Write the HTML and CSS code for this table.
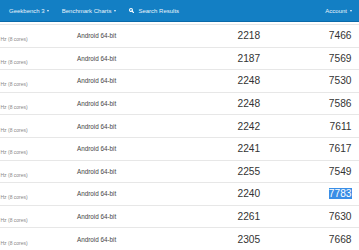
FILE: index.html
```html
<!DOCTYPE html>
<html lang="en">
<head>
<meta charset="utf-8">
<title>Geekbench 3 results</title>
<link rel="stylesheet" href="styles.css">
</head>
<body>
<nav class="topbar">
  <a class="nav-item">Geekbench 3<span class="caret"></span></a>
  <a class="nav-item">Benchmark Charts<span class="caret"></span></a>
  <a class="nav-item search"><svg viewBox="0 0 5 5" aria-hidden="true"><circle cx="2" cy="2" r="1.45" fill="none" stroke="currentColor" stroke-width="1.1"/><line x1="3" y1="3" x2="4.6" y2="4.6" stroke="currentColor" stroke-width="1.2" stroke-linecap="round"/></svg>Search Results</a>
  <a class="nav-item account">Account<span class="caret"></span></a>
</nav>
<main class="results">
  <div class="row"><div class="proc">Hz (8 cores)</div><div class="platform">Android 64-bit</div><div class="score">2218</div><div class="score multi">7466</div></div>
  <div class="row"><div class="proc">Hz (8 cores)</div><div class="platform">Android 64-bit</div><div class="score">2187</div><div class="score multi">7569</div></div>
  <div class="row"><div class="proc">Hz (8 cores)</div><div class="platform">Android 64-bit</div><div class="score">2248</div><div class="score multi">7530</div></div>
  <div class="row"><div class="proc">Hz (8 cores)</div><div class="platform">Android 64-bit</div><div class="score">2248</div><div class="score multi">7586</div></div>
  <div class="row"><div class="proc">Hz (8 cores)</div><div class="platform">Android 64-bit</div><div class="score">2242</div><div class="score multi">7611</div></div>
  <div class="row"><div class="proc">Hz (8 cores)</div><div class="platform">Android 64-bit</div><div class="score">2241</div><div class="score multi">7617</div></div>
  <div class="row"><div class="proc">Hz (8 cores)</div><div class="platform">Android 64-bit</div><div class="score">2255</div><div class="score multi">7549</div></div>
  <div class="row"><div class="proc">Hz (8 cores)</div><div class="platform">Android 64-bit</div><div class="score">2240</div><div class="score multi"><span class="sel">7783</span></div></div>
  <div class="row"><div class="proc">Hz (8 cores)</div><div class="platform">Android 64-bit</div><div class="score">2261</div><div class="score multi">7630</div></div>
  <div class="row"><div class="proc">Hz (8 cores)</div><div class="platform">Android 64-bit</div><div class="score">2305</div><div class="score multi">7668</div></div>
</main>
</body>
</html>
```

FILE: styles.css
```css
html, body {
  margin: 0;
  background: #ffffff;
  overflow: hidden;
}
body {
  font-family: "Liberation Sans", Arial, sans-serif;
  width: 359px;
}
.topbar {
  display: flex;
  align-items: center;
  gap: 12.5px;
  height: 21px;
  padding: 0 7.5px 0 9px;
  background: #137fc4;
  border-bottom: 1px solid #0b6aa9;
  font-size: 6px;
  color: #eaf3fb;
}
.nav-item {
  display: flex;
  align-items: center;
  white-space: nowrap;
}
.caret {
  width: 0;
  height: 0;
  margin-left: 2.5px;
  border-left: 1.5px solid transparent;
  border-right: 1.5px solid transparent;
  border-top: 2px solid currentColor;
}
.search svg {
  width: 5px;
  height: 5px;
  margin-left: 1px;
  margin-right: 4px;
  color: #ffffff;
}
.account {
  margin-left: auto;
}
.results {
  padding-top: 2px;
}
.row {
  display: grid;
  grid-template-columns: 77px 160.5px 1fr auto;
  align-items: center;
  height: 22.6px;
  box-sizing: border-box;
  border-top: 1px solid #e7e7e7;
  padding-right: 7.5px;
}
.proc {
  white-space: nowrap;
  padding-left: 0.5px;
  margin-top: 7px;
  font-size: 5px;
  color: #888888;
}
.platform {
  font-size: 6.3px;
  color: #444444;
}
.score {
  font-size: 10.2px;
  color: #333333;
}
.sel {
  background: #3a8ee6;
  color: #ffffff;
}
```
